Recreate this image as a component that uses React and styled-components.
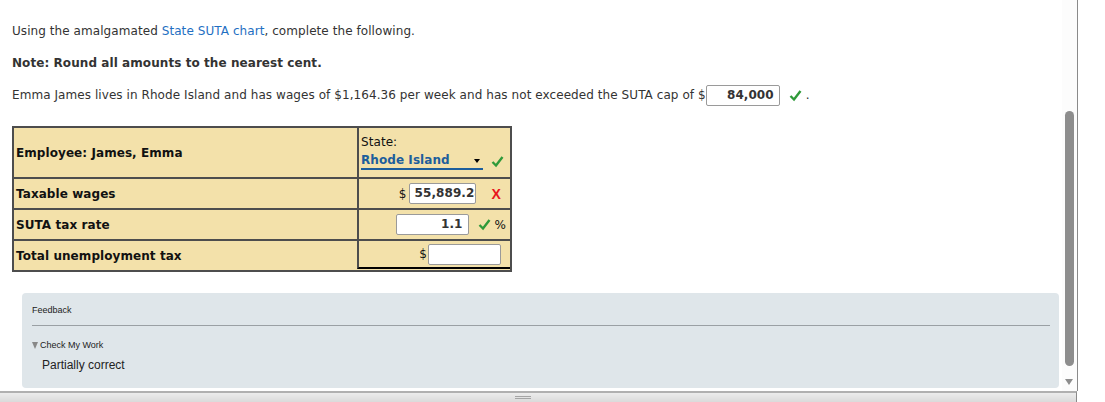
import React from "react";
import styled, { createGlobalStyle } from "styled-components";

const Global = createGlobalStyle`
  html, body {
    margin: 0;
    padding: 0;
    background: #fff;
  }
  body {
    font-family: "DejaVu Sans", Verdana, sans-serif;
    color: #333;
  }
`;

const Page = styled.div`
  width: 1105px;
  height: 402px;
  overflow: hidden;
  display: flex;
  flex-direction: column;
`;

const Frame = styled.div`
  width: 1077px;
  height: 391px;
  display: flex;
  border-right: 1px solid #8a8a8a;
`;

const Content = styled.div`
  flex: 1;
  padding: 0 0 0 12px;
  font-size: 12px;
  letter-spacing: 0.07px;
`;

const Para = styled.p`
  margin: 0;
  height: 32px;
  line-height: 32px;
  padding-top: ${(p) => p.$top || 0}px;
  font-weight: ${(p) => (p.$bold ? "bold" : "normal")};
  white-space: nowrap;
`;

const Link = styled.a`
  color: #1f6fc2;
  text-decoration: none;
`;

const NumBox = styled.span`
  display: inline-block;
  vertical-align: middle;
  box-sizing: border-box;
  width: ${(p) => p.$w || 74}px;
  height: 21px;
  line-height: 19px;
  border: 1px solid #9a9a9a;
  border-radius: 2px;
  background: #fff;
  text-align: ${(p) => (p.$clip ? "left" : "right")};
  padding: ${(p) => (p.$clip ? "0 0 0 5px" : "0 5px 0 0")};
  font-weight: bold;
  color: #333;
  overflow: hidden;
  white-space: nowrap;
`;

const Check = styled.svg`
  width: 13px;
  height: 13px;
  vertical-align: middle;
  margin: ${(p) => p.$m || "0 6px 0 8px"};
  flex: none;
`;

const Cross = styled.span`
  color: #e8141c;
  font-family: "Liberation Sans", Arial, sans-serif;
  font-weight: bold;
  font-size: 14px;
  margin-left: 16px;
`;

const Table = styled.div`
  margin-top: 15px;
  width: 500px;
  box-sizing: border-box;
  display: grid;
  grid-template-columns: 343px 1fr;
  border: 2px solid #4d4d4d;
  background: #f3e1aa;
  color: #111;
`;

const Cell = styled.div`
  box-sizing: border-box;
  height: ${(p) => p.$h || 31}px;
  display: flex;
  align-items: center;
  justify-content: ${(p) => (p.$right ? "flex-end" : "flex-start")};
  padding: ${(p) => (p.$right ? "0 4px 0 4px" : "0 2px")};
  font-weight: ${(p) => (p.$bold ? "bold" : "normal")};
  border-top: ${(p) => (p.$first ? "none" : "2px solid #4d4d4d")};
  border-left: ${(p) => (p.$right ? "2px solid #4d4d4d" : "none")};
  ${(p) => p.$total && "border-bottom: 2px solid #000; margin-bottom: 1px;"}
`;

const StateCell = styled(Cell)`
  flex-direction: column;
  align-items: flex-start;
  justify-content: center;
  padding-left: 2px;
`;

const StateRow = styled.div`
  display: flex;
  align-items: center;
  margin-top: 4px;
`;

const Select = styled.div`
  width: 122px;
  box-sizing: border-box;
  display: flex;
  align-items: center;
  justify-content: space-between;
  color: #1d5e9c;
  font-weight: bold;
  border-bottom: 2px solid #1d5e9c;
  line-height: 15px;
`;

const Caret = styled.span`
  width: 0;
  height: 0;
  border-left: 3px solid transparent;
  border-right: 3px solid transparent;
  border-top: 4px solid #000;
  margin-right: 3px;
`;

const Dollar = styled.span`
  margin-right: ${(p) => p.$gap || 1}px;
`;

const Spacer = styled.span`
  width: ${(p) => p.$w}px;
  flex: none;
`;

const Feedback = styled.div`
  margin: 21px 3px 0 10px;
  height: 95px;
  background: #dfe6ea;
  border-radius: 4px;
  padding: 0 9px 0 10px;
  font-family: "Liberation Sans", Arial, sans-serif;
  letter-spacing: 0;
  color: #222;
`;

const FeedTitle = styled.div`
  font-size: 9px;
  height: 32px;
  line-height: 35px;
  border-bottom: 1px solid #9aa0a4;
`;

const Toggle = styled.div`
  font-size: 9px;
  margin-top: 14px;
  display: flex;
  align-items: center;
  gap: 2px;
  &::before {
    content: "";
    border-left: 3px solid transparent;
    border-right: 3px solid transparent;
    border-top: 7px solid #888;
  }
`;

const Result = styled.div`
  font-size: 12px;
  margin: 8px 0 0 10px;
`;

const Track = styled.div`
  width: 15px;
  position: relative;
  background: #fcfcfc;
`;

const Thumb = styled.div`
  position: absolute;
  left: 3px;
  top: 111px;
  width: 9px;
  height: 255px;
  border-radius: 5px;
  background: #8d8d8d;
`;

const DownArrow = styled.div`
  position: absolute;
  left: 3px;
  top: 379px;
  border-left: 4px solid transparent;
  border-right: 4px solid transparent;
  border-top: 6px solid #8d8d8d;
`;

const BottomBar = styled.div`
  width: 1077px;
  height: 11px;
  border-top: 2px solid #b0b0b0;
  border-right: 1px solid #8a8a8a;
  background: linear-gradient(#ececec, #dadada);
  box-sizing: border-box;
  padding: 3px 0 0 515px;
`;

const Grip = styled.div`
  width: 16px;
  height: 3px;
  border-top: 1px solid #a5a5a5;
  border-bottom: 1px solid #a5a5a5;
  box-sizing: border-box;
`;

const Tick = ({ m }) => (
  <Check viewBox="0 0 13 13" $m={m}>
    <path d="M1.5 7 L5 10.5 L11.5 2" fill="none" stroke="#2f9a3a" strokeWidth="2.4" />
  </Check>
);

export default function App() {
  return (
    <Page>
      <Global />
      <Frame>
        <Content>
          <Para $top={15}>
            Using the amalgamated <Link>State SUTA chart</Link>, complete the following.
          </Para>
          <Para $bold>Note: Round all amounts to the nearest cent.</Para>
          <Para>
            Emma James lives in Rhode Island and has wages of $1,164.36 per week and has not
            exceeded the SUTA cap of $<NumBox $w={74}>84,000</NumBox>
            <Tick m="0 4px 0 9px" />.
          </Para>
          <Table>
            <Cell $first $bold $h={49}>Employee: James, Emma</Cell>
            <StateCell $first $right $h={49}>
              <span>State:</span>
              <StateRow>
                <Select>
                  Rhode Island
                  <Caret />
                </Select>
                <Tick m="0 0 0 8px" />
              </StateRow>
            </StateCell>
            <Cell $bold>Taxable wages</Cell>
            <Cell $right>
              <Dollar $gap={2}>$</Dollar>
              <NumBox $w={67} $clip>
                55,889.28
              </NumBox>
              <Cross>X</Cross>
              <Spacer $w={5} />
            </Cell>
            <Cell $bold>SUTA tax rate</Cell>
            <Cell $right>
              <NumBox $w={73}>1.1</NumBox>
              <Tick m="0 4px 0 9px" />%
            </Cell>
            <Cell $bold>Total unemployment tax</Cell>
            <Cell $right $total $h={30}>
              <Dollar>$</Dollar>
              <NumBox $w={73} />
              <Spacer $w={5} />
            </Cell>
          </Table>
          <Feedback>
            <FeedTitle>Feedback</FeedTitle>
            <Toggle>Check My Work</Toggle>
            <Result>Partially correct</Result>
          </Feedback>
        </Content>
        <Track>
          <Thumb />
          <DownArrow />
        </Track>
      </Frame>
      <BottomBar>
        <Grip />
      </BottomBar>
    </Page>
  );
}
